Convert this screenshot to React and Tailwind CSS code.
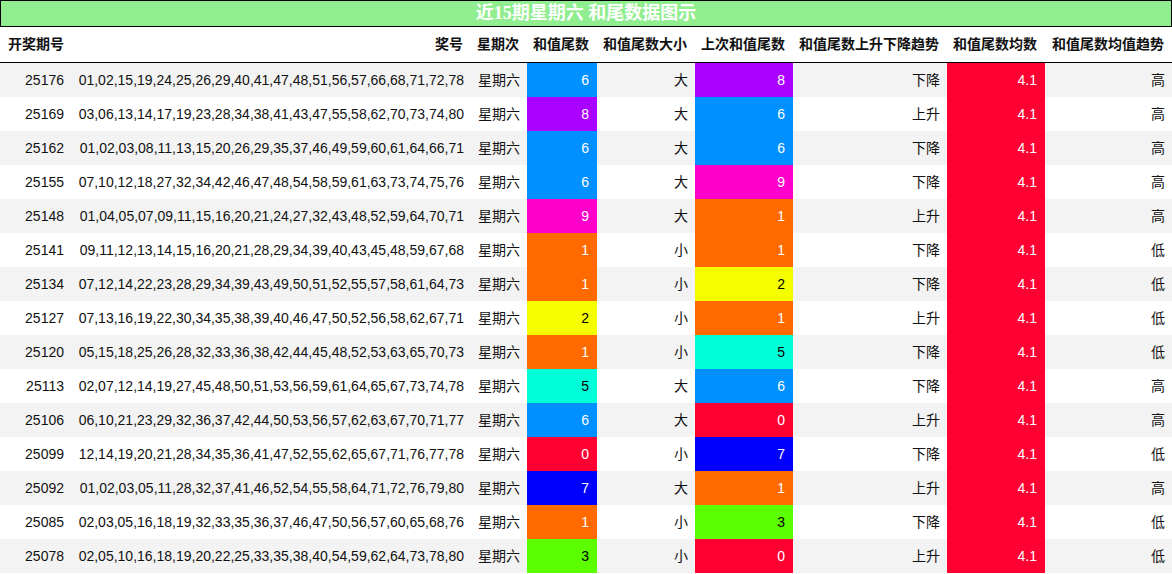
const rows = [
["25176","01,02,15,19,24,25,26,29,40,41,47,48,51,56,57,66,68,71,72,78",6,"大",8,"下降","高"],
["25169","03,06,13,14,17,19,23,28,34,38,41,43,47,55,58,62,70,73,74,80",8,"大",6,"上升","高"],
["25162","01,02,03,08,11,13,15,20,26,29,35,37,46,49,59,60,61,64,66,71",6,"大",6,"下降","高"],
["25155","07,10,12,18,27,32,34,42,46,47,48,54,58,59,61,63,73,74,75,76",6,"大",9,"下降","高"],
["25148","01,04,05,07,09,11,15,16,20,21,24,27,32,43,48,52,59,64,70,71",9,"大",1,"上升","高"],
["25141","09,11,12,13,14,15,16,20,21,28,29,34,39,40,43,45,48,59,67,68",1,"小",1,"下降","低"],
["25134","07,12,14,22,23,28,29,34,39,43,49,50,51,52,55,57,58,61,64,73",1,"小",2,"下降","低"],
["25127","07,13,16,19,22,30,34,35,38,39,40,46,47,50,52,56,58,62,67,71",2,"小",1,"上升","低"],
["25120","05,15,18,25,26,28,32,33,36,38,42,44,45,48,52,53,63,65,70,73",1,"小",5,"下降","低"],
["25113","02,07,12,14,19,27,45,48,50,51,53,56,59,61,64,65,67,73,74,78",5,"大",6,"下降","高"],
["25106","06,10,21,23,29,32,36,37,42,44,50,53,56,57,62,63,67,70,71,77",6,"大",0,"上升","高"],
["25099","12,14,19,20,21,28,34,35,36,41,47,52,55,62,65,67,71,76,77,78",0,"小",7,"下降","低"],
["25092","01,02,03,05,11,28,32,37,41,46,52,54,55,58,64,71,72,76,79,80",7,"大",1,"上升","高"],
["25085","02,03,05,16,18,19,32,33,35,36,37,46,47,50,56,57,60,65,68,76",1,"小",3,"下降","低"],
["25078","02,05,10,16,18,19,20,22,25,33,35,38,40,54,59,62,64,73,78,80",3,"小",0,"上升","低"],
];
const C = {
0:"bg-[#ff0033] text-white",1:"bg-[#ff6a00] text-white",2:"bg-[#f5ff00] text-black",3:"bg-[#5cff00] text-black",
5:"bg-[#00ffd9] text-black",6:"bg-[#0090ff] text-white",7:"bg-[#0000ff] text-white",8:"bg-[#aa00ff] text-white",9:"bg-[#ff00cc] text-white",
};
const grid = "grid grid-cols-[71px_400px_56px_70px_98px_98px_154px_98px_127px]";
export default function App(){
  return (
    <div className="w-[1172px] text-[14px] text-[#111]" style={{fontFamily:'"Liberation Sans","Noto Sans CJK SC",sans-serif'}}>
      <div className="h-[27px] bg-[#90ee90] border border-black flex items-center justify-center text-white font-bold text-[18px]" style={{fontFamily:'"Liberation Serif","Noto Sans CJK SC",serif'}}>近15期星期六 和尾数据图示</div>
      <div className={`${grid} h-[36px] border-b border-black font-bold items-center`}>
        <div className="pl-2">开奖期号</div>
        <div className="text-right pr-2">奖号</div>
        <div className="text-right pr-2">星期次</div>
        <div className="text-right pr-2">和值尾数</div>
        <div className="text-right pr-2">和值尾数大小</div>
        <div className="text-right pr-2">上次和值尾数</div>
        <div className="text-right pr-2">和值尾数上升下降趋势</div>
        <div className="text-right pr-2">和值尾数均数</div>
        <div className="text-right pr-2">和值尾数均值趋势</div>
      </div>
      {rows.map((r,i)=>(
        <div key={r[0]} className={`${grid} h-[34px] ${i%2===0?"bg-[#f3f3f3]":"bg-white"}`}>
          <div className="text-right pr-[7px] flex items-center justify-end">{r[0]}</div>
          <div className="pr-[7px] flex items-center justify-end">{r[1]}</div>
          <div className="pr-[7px] flex items-center justify-end">星期六</div>
          <div className={`pr-[8px] flex items-center justify-end ${C[r[2]]}`}>{r[2]}</div>
          <div className="pr-[7px] flex items-center justify-end">{r[3]}</div>
          <div className={`pr-[8px] flex items-center justify-end ${C[r[4]]}`}>{r[4]}</div>
          <div className="pr-[7px] flex items-center justify-end">{r[5]}</div>
          <div className="pr-[8px] flex items-center justify-end bg-[#ff0033] text-white">4.1</div>
          <div className="pr-[7px] flex items-center justify-end">{r[6]}</div>
        </div>
      ))}
    </div>
  );
}
